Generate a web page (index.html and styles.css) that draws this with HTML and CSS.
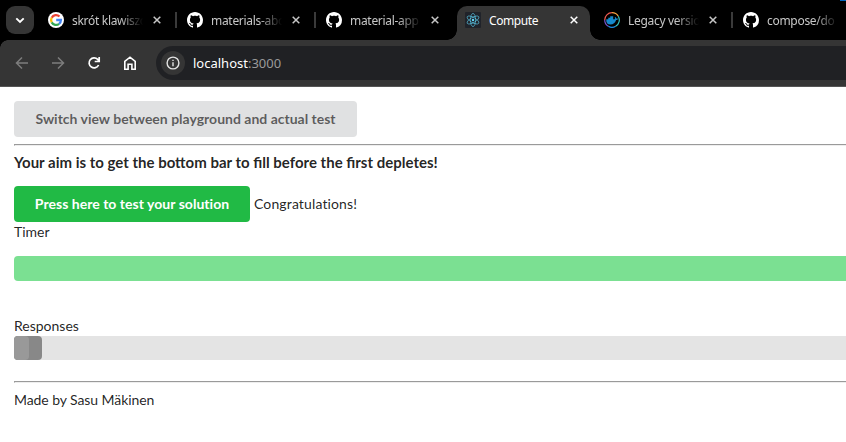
FILE: index.html
```html
<!DOCTYPE html>
<html lang="en">
<head>
<meta charset="utf-8">
<title>Compute</title>
<link rel="stylesheet" href="styles.css">
</head>
<body>
<svg class="defs" width="0" height="0">
  <symbol id="github" viewBox="0 0 16 16"><path fill="#fff" d="M8 0C3.58 0 0 3.58 0 8c0 3.54 2.29 6.53 5.47 7.59.4.07.55-.17.55-.38 0-.19-.01-.82-.01-1.49-2.01.37-2.53-.49-2.69-.94-.09-.23-.48-.94-.82-1.13-.28-.15-.68-.52-.01-.53.63-.01 1.08.58 1.23.82.72 1.21 1.87.87 2.33.66.07-.52.28-.87.51-1.07-1.78-.2-3.64-.89-3.64-3.95 0-.87.31-1.59.82-2.15-.08-.2-.36-1.02.08-2.12 0 0 .67-.21 2.2.82.64-.18 1.32-.27 2-.27s1.36.09 2 .27c1.53-1.04 2.2-.82 2.2-.82.44 1.1.16 1.92.08 2.12.51.56.82 1.27.82 2.15 0 3.07-1.87 3.75-3.65 3.95.29.25.54.73.54 1.48 0 1.07-.01 1.93-.01 2.2 0 .21.15.46.55.38A8.01 8.01 0 0 0 16 8c0-4.42-3.58-8-8-8z"/></symbol>
  <symbol id="close" viewBox="0 0 8 8"><path d="M.7.7l6.600 6.600M7.300.7L.7 7.300" fill="none" stroke="currentColor" stroke-width="1.500"/></symbol>
</svg>
<div class="tabstrip">
  <div class="tab-search"><svg width="10" height="7" viewBox="0 0 10 7"><path d="M1.300 1.300L5 5l3.700-3.700" fill="none" stroke="#fff" stroke-width="1.900"/></svg></div>
  <div class="tab first">
    <svg class="favicon" viewBox="0 0 16 16"><circle cx="8" cy="8" r="8" fill="#fff"/><g fill="none" stroke-width="2.300"><path d="M11.500 4.500A4.900 4.900 0 0 0 3.700 5.700" stroke="#ea4335"/><path d="M3.700 5.700a4.900 4.900 0 0 0 0 4.700" stroke="#fbbc05"/><path d="M3.700 10.400a4.900 4.900 0 0 0 7.400 1.400" stroke="#34a853"/><path d="M11.100 11.800C12.300 10.900 12.900 9.600 12.900 8H8.200" stroke="#4285f4"/></g></svg>
    <span class="title">skrót klawiszo</span><svg class="close"><use href="#close"/></svg>
  </div>
  <div class="tab divided"><svg class="favicon"><use href="#github"/></svg><span class="title">materials-abo</span><svg class="close"><use href="#close"/></svg></div>
  <div class="tab divided"><svg class="favicon"><use href="#github"/></svg><span class="title">material-app</span><svg class="close"><use href="#close"/></svg></div>
  <div class="tab active">
    <svg class="favicon" viewBox="0 0 16 16"><rect width="16" height="16" rx="1" fill="#20232a"/><g fill="none" stroke="#61dafb" stroke-opacity=".8" stroke-width=".7"><ellipse cx="8" cy="8" rx="6.600" ry="2.600" transform="rotate(90 8 8)"/><ellipse cx="8" cy="8" rx="6.600" ry="2.600" transform="rotate(30 8 8)"/><ellipse cx="8" cy="8" rx="6.600" ry="2.600" transform="rotate(150 8 8)"/></g><circle cx="8" cy="8" r="1.200" fill="#61dafb"/></svg>
    <span class="title">Compute</span><svg class="close"><use href="#close"/></svg>
  </div>
  <div class="tab">
    <svg class="favicon" viewBox="0 0 16 16"><g fill="none" stroke-width="1.200"><path d="M8 .7A7.300 7.300 0 0 1 14.300 4.300" stroke="#f7a541"/><path d="M14.300 4.300A7.300 7.300 0 0 1 11.700 14.300" stroke="#35c5bd"/><path d="M11.700 14.300A7.300 7.300 0 0 1 4.300 14.300" stroke="#1c90e8"/><path d="M4.300 14.300A7.300 7.300 0 0 1 .7 8" stroke="#7854c7"/><path d="M.7 8A7.300 7.300 0 0 1 8 .7" stroke="#ef5950"/></g><path fill="#1589cd" d="M2.300 7.300h2V5.800h1.900V4.200h3v3.100h1.500c.4-.5.300-1.200 0-1.800l.7-.6c.7.500.9 1 .9 1.600.7-.1 1.400 0 1.900.3-.4.8-1.100 1.200-2.100 1.200-.9 2.900-2.800 4.500-5.600 4.500-3.200 0-4.600-2-4.200-5z"/></svg>
    <span class="title">Legacy versio</span><svg class="close"><use href="#close"/></svg>
  </div>
  <div class="tab divided"><svg class="favicon"><use href="#github"/></svg><span class="title">compose/do</span></div>
  <div class="window-edge"></div>
</div>
<div class="toolbar">
  <svg class="nav muted" viewBox="0 0 16 16"><path d="M14 8H3M8 2.500L2.500 8 8 13.500"/></svg>
  <svg class="nav muted" viewBox="0 0 16 16"><path d="M2 8h11M8 2.500L13.500 8 8 13.500"/></svg>
  <svg class="nav" viewBox="0 0 16 16"><path d="M12.600 10A5 5 0 1 1 11.700 4.400L13 5.800M13.200 2v4.500H8.700" stroke-width="1.700"/></svg>
  <svg class="nav" viewBox="0 0 16 16"><path d="M2.800 6.300L8 2.200l5.200 4.100v7.900H9.900V9.200H6.100v5H2.800z" stroke-width="1.600"/></svg>
  <div class="address">
    <div class="info"><svg width="14" height="14" viewBox="0 0 14 14"><circle cx="7" cy="7" r="5.900" fill="none" stroke="#e3e3e3" stroke-width="1.400"/><path d="M7 6.300v4M7 3.700v1.400" stroke="#e3e3e3" stroke-width="1.400"/></svg></div>
    <span class="host">localhost</span><span class="port">:3000</span>
  </div>
</div>
<main>
  <button class="btn secondary">Switch view between playground and actual test</button>
  <hr>
  <h3>Your aim is to get the bottom bar to fill before the first depletes!</h3>
  <div class="row"><button class="btn positive">Press here to test your solution</button><span class="result">Congratulations!</span></div>
  <div class="label">Timer</div>
  <div class="progress timer"></div>
  <div class="label">Responses</div>
  <div class="progress responses"><div class="bar"><div class="shine"></div></div></div>
  <hr>
  <div class="label footer">Made by Sasu Mäkinen</div>
</main>
</body>
</html>
```
FILE: styles.css
```css
* { box-sizing: border-box; }
body { margin: 0; width: 846px; height: 442px; overflow: hidden; background: #fff; font: 14px/20px Lato, sans-serif; color: rgba(0,0,0,.87); }
.defs { position: absolute; }
.tabstrip { position: relative; display: flex; height: 40px; background: #000; overflow: hidden; font: 12px/16px "Noto Sans", sans-serif; letter-spacing: -.3px; color: #c7c7c7; }
.tab-search { flex: none; display: flex; align-items: center; justify-content: center; width: 28px; height: 28px; margin: 6px 3px 0 6px; border-radius: 9px; background: #353535; }
.tab { position: relative; flex: none; display: flex; align-items: center; width: 139px; height: 40px; padding-left: 11px; }
.divided::before { content: ""; position: absolute; left: -1px; top: 12px; width: 2px; height: 16px; background: #3a3a3a; }
.favicon { flex: none; width: 16px; height: 16px; }
.title { flex: none; width: 72px; margin-left: 8px; padding-top: 1px; white-space: nowrap; -webkit-mask-image: linear-gradient(90deg, #000 48px, transparent 71px); mask-image: linear-gradient(90deg, #000 48px, transparent 71px); }
.close { flex: none; width: 8px; height: 8px; margin-left: 9px; }
.active { width: 133px; margin: 6px 3px 0; height: 34px; padding: 0 0 6px 8px; border-radius: 10px 10px 0 0; background: #353535; color: #fff; }
.active .title { letter-spacing: -.4px; -webkit-mask-image: none; mask-image: none; }
.active::before, .active::after { content: ""; position: absolute; bottom: 0; width: 10px; height: 10px; }
.active::before { left: -10px; background: radial-gradient(circle at 0 0, transparent 9.5px, #353535 10px); }
.active::after { right: -10px; background: radial-gradient(circle at 100% 0, transparent 9.5px, #353535 10px); }
.window-edge { position: absolute; right: 0; top: 0; width: 6px; height: 1px; background: #0067c0; }
.toolbar { position: relative; display: flex; align-items: center; height: 47px; padding: 0 0 1px 14px; background: linear-gradient(#353535, #353535) 0 0 / 100% 46px no-repeat, #555; }
.toolbar::before { content: ""; position: absolute; left: 0; top: 0; width: 8px; height: 8px; background: radial-gradient(circle at 100% 100%, transparent 7.5px, #000 8px); }
.nav { width: 16px; height: 16px; margin-right: 20px; fill: none; stroke: #fff; stroke-width: 1.5; }
.muted { stroke: #7d7d7d; }
.address { flex: 1; display: flex; align-items: center; height: 34px; margin-left: -2px; padding-left: 5px; border-radius: 17px 0 0 17px; background: #202124; font: 13px/20px "Noto Sans", sans-serif; }
.info { display: flex; align-items: center; justify-content: center; width: 24px; height: 24px; margin-right: 8px; border-radius: 50%; background: #353535; }
.host { color: #fff; }
.port { color: #9a9a9a; }
main { padding: 14px 0 0 14px; }
.btn { display: block; height: 36px; padding: 0; border: 0; border-radius: 4px; font: bold 14px/14px Lato, sans-serif; white-space: nowrap; }
.secondary { width: 343px; background: #e0e1e2; color: rgba(0,0,0,.6); }
.positive { width: 236px; background: #21ba45; color: #fff; font-variant-ligatures: none; letter-spacing: .03px; }
hr { height: 2px; margin: 7px 0 8px; border: solid; border-width: 1px 0 1px 1px; border-color: #9a9a9a #eee #eee #9a9a9a; }
h3 { margin: -1px 0 0; font: bold 15px/18px Lato, sans-serif; }
.row { display: flex; align-items: center; gap: 4px; margin-top: 15px; }
.result { font-variant-ligatures: none; letter-spacing: .13px; }
.label { height: 20px; }
.progress { height: 24px; border-radius: 4px 0 0 4px; background: #e4e4e4; }
.timer { height: 25px; margin: 14px 0 35px; background: #7be092; }
.responses { margin-bottom: 21px; }
.bar { width: 28px; height: 24px; border-radius: 4px; background: #888; }
.shine { width: 15px; height: 24px; border-radius: 4px; background: #999; }
.footer { margin-top: -1px; letter-spacing: -.08px; }
```
